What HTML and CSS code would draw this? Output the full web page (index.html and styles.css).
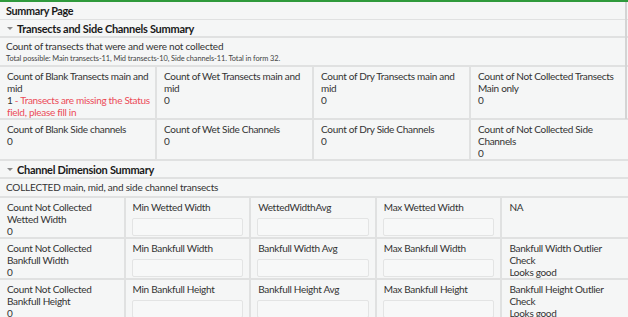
FILE: index.html
```html
<!DOCTYPE html>
<html lang="en">
  <head>
    <meta charset="UTF-8" />
    <title>Summary Page</title>
    <link rel="stylesheet" href="styles.css">
  </head>
  <body>
    <div id="form">
      <div class="page-title">Summary Page</div>

      <div class="group-head"><span class="caret"></span>Transects and Side Channels Summary</div>
      <div class="note">
        <div class="note-main">Count of transects that were and were not collected</div>
        <div class="note-small">Total possible: Main transects-11, Mid transects-10, Side channels-11. Total in form 32.</div>
      </div>
      <div class="grid four">
        <div class="cell">
          <div class="label">Count of Blank Transects main and mid</div>
          <div class="value">1 <span class="warn">- Transects are missing the Status field, please fill in</span></div>
        </div>
        <div class="cell">
          <div class="label">Count of Wet Transects main and mid</div>
          <div class="value">0</div>
        </div>
        <div class="cell">
          <div class="label">Count of Dry Transects main and mid</div>
          <div class="value">0</div>
        </div>
        <div class="cell">
          <div class="label">Count of Not Collected Transects Main only</div>
          <div class="value">0</div>
        </div>
        <div class="cell">
          <div class="label">Count of Blank Side channels</div>
          <div class="value">0</div>
        </div>
        <div class="cell">
          <div class="label">Count of Wet Side Channels</div>
          <div class="value">0</div>
        </div>
        <div class="cell">
          <div class="label">Count of Dry Side Channels</div>
          <div class="value">0</div>
        </div>
        <div class="cell">
          <div class="label">Count of Not Collected Side Channels</div>
          <div class="value">0</div>
        </div>
      </div>

      <div class="group-head"><span class="caret"></span>Channel Dimension Summary</div>
      <div class="note second">
        <div class="note-main">COLLECTED main, mid, and side channel transects</div>
      </div>
      <div class="grid five">
        <div class="cell">
          <div class="label">Count Not Collected Wetted Width</div>
          <div class="value">0</div>
        </div>
        <div class="cell">
          <div class="label">Min Wetted Width</div>
          <div class="input"></div>
        </div>
        <div class="cell">
          <div class="label">WettedWidthAvg</div>
          <div class="input"></div>
        </div>
        <div class="cell">
          <div class="label">Max Wetted Width</div>
          <div class="input"></div>
        </div>
        <div class="cell">
          <div class="label">NA</div>
        </div>

        <div class="cell">
          <div class="label">Count Not Collected Bankfull Width</div>
          <div class="value">0</div>
        </div>
        <div class="cell">
          <div class="label">Min Bankfull Width</div>
          <div class="input"></div>
        </div>
        <div class="cell">
          <div class="label">Bankfull Width Avg</div>
          <div class="input"></div>
        </div>
        <div class="cell">
          <div class="label">Max Bankfull Width</div>
          <div class="input"></div>
        </div>
        <div class="cell">
          <div class="label">Bankfull Width Outlier Check</div>
          <div class="value">Looks good</div>
        </div>

        <div class="cell">
          <div class="label">Count Not Collected Bankfull Height</div>
          <div class="value">0</div>
        </div>
        <div class="cell">
          <div class="label">Min Bankfull Height</div>
          <div class="input"></div>
        </div>
        <div class="cell">
          <div class="label">Bankfull Height Avg</div>
          <div class="input"></div>
        </div>
        <div class="cell">
          <div class="label">Max Bankfull Height</div>
          <div class="input"></div>
        </div>
        <div class="cell">
          <div class="label">Bankfull Height Outlier Check</div>
          <div class="value">Looks good</div>
        </div>
      </div>
      <div class="scroll-thumb"></div>
    </div>
  </body>
</html>
```

FILE: styles.css
```css
* {
  box-sizing: border-box;
}
body {
  margin: 0;
  background: #f5f6f6;
  font-family: "Lato", "Noto Sans", sans-serif;
  color: #333;
}
#form {
  position: relative;
  width: 628px;
  border-top: 2px solid #2f9a3c;
}
.page-title {
  height: 18px;
  padding: 2px 6px 0;
  font-size: 10.8px;
  letter-spacing: -0.3px;
  line-height: 14px;
  font-weight: bold;
  color: #1a1a1a;
  border-bottom: 1px solid #e0e1e1;
}
.group-head {
  height: 18px;
  padding: 0 6px;
  font-size: 11px;
  letter-spacing: -0.28px;
  font-weight: bold;
  color: #1a1a1a;
  border-bottom: 2px solid #e0e1e1;
  display: flex;
  align-items: center;
}
.caret {
  width: 0;
  height: 0;
  margin: 1px 4px 0 1px;
  border-left: 3px solid transparent;
  border-right: 3px solid transparent;
  border-top: 3px solid #8a8a8a;
}
.note {
  padding: 2px 6px 0;
  border-bottom: 2px solid #e0e1e1;
}
.note.second {
  padding: 2px 6px 2px;
}
.note-main {
  font-size: 10px;
  letter-spacing: -0.2px;
  line-height: 13px;
}
.note-small {
  font-size: 7.4px;
  letter-spacing: -0.08px;
  line-height: 12px;
  color: #444;
}
.grid {
  display: grid;
}
.four {
  grid-template-columns: repeat(4, 1fr);
}
.five {
  grid-template-columns: repeat(5, 1fr);
}
.cell {
  padding: 3px 3px 0 7px;
  font-size: 10px;
  letter-spacing: -0.3px;
  line-height: 12px;
  border-right: 2px solid #e0e1e1;
  border-bottom: 2px solid #e0e1e1;
}
.four .cell:nth-child(4n) {
  border-right: none;
}
.five .cell {
  height: 41px;
  padding-right: 8px;
}
.five .cell:nth-child(5n) {
  border-right: none;
}
.warn {
  color: #ec4b58;
}
.input {
  height: 18px;
  margin: 5px -2px 0 -1px;
  border: 1px solid #e3e4e4;
  border-radius: 2px;
  background: #f7f8f8;
}
.scroll-thumb {
  position: absolute;
  right: 1px;
  top: 0;
  width: 2px;
  height: 117px;
  background: #d4d4d4;
}
```
